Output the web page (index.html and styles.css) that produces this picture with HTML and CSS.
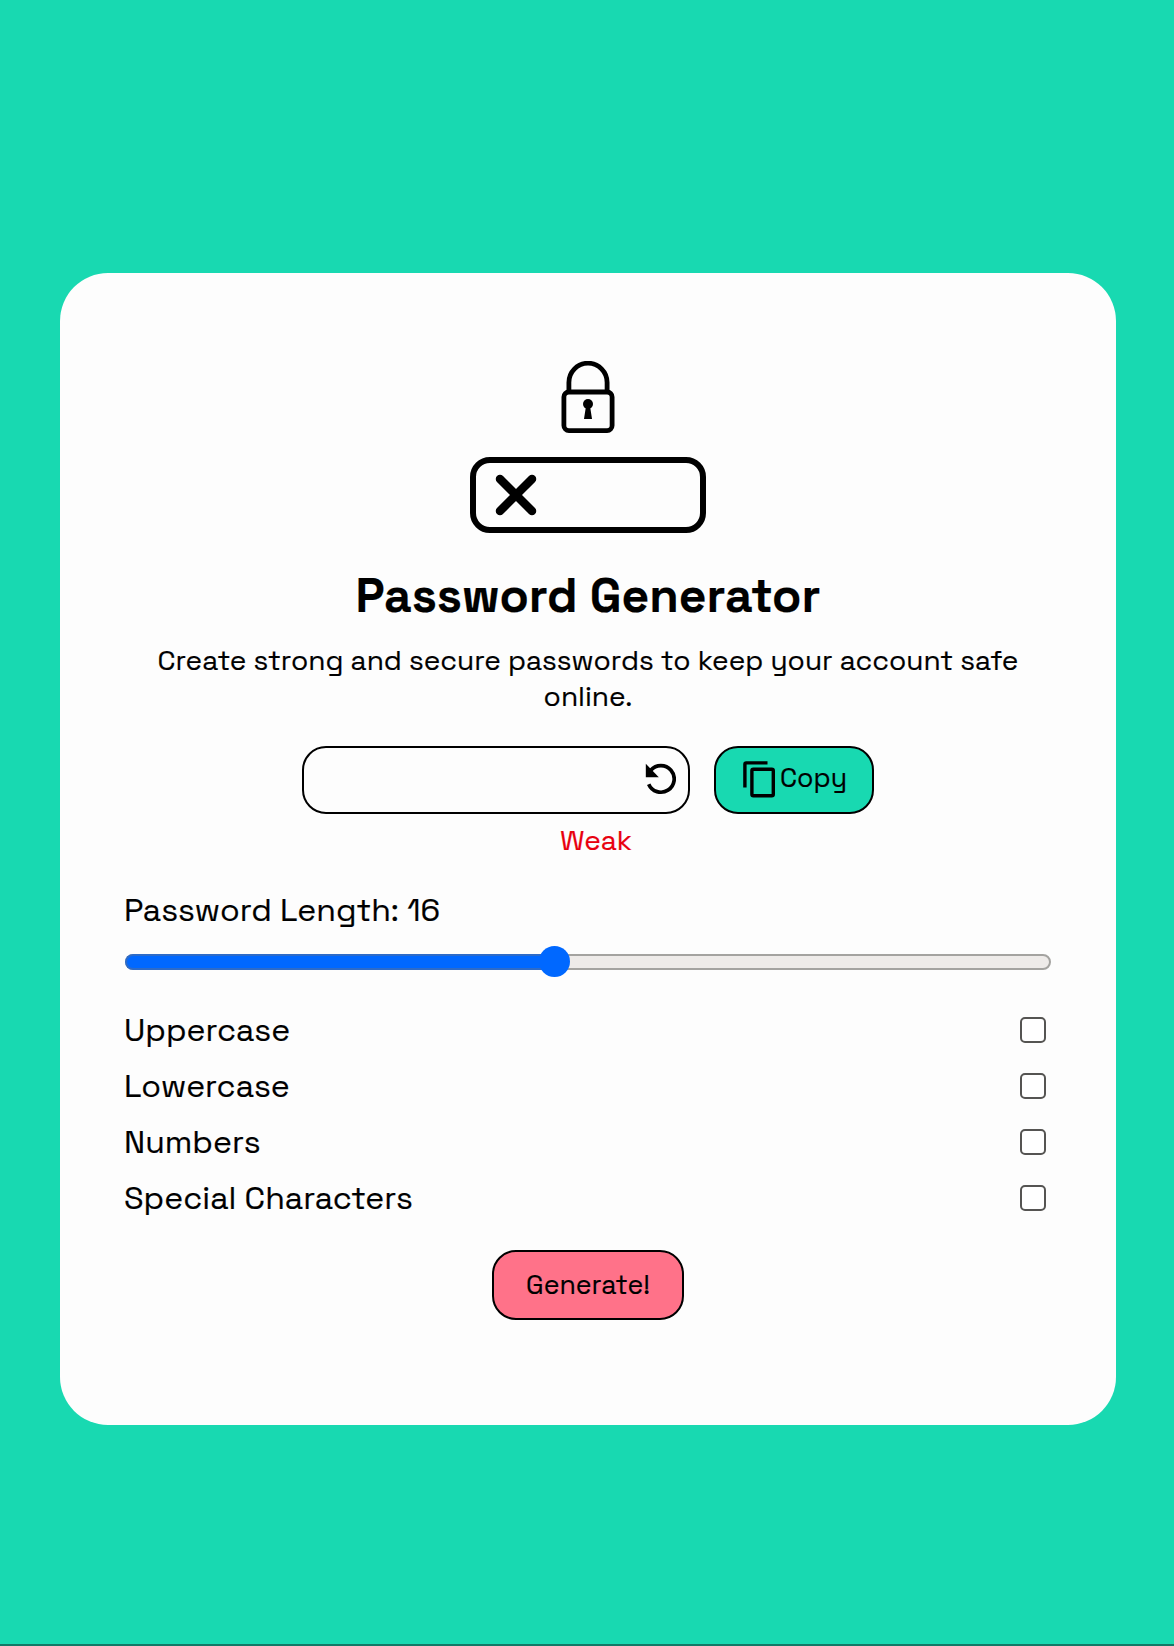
FILE: index.html
```html
<!DOCTYPE html>
<html lang="en">
<head>
<meta charset="utf-8">
<title>Password Generator</title>
<link rel="stylesheet" href="styles.css">
</head>
<body>
<main class="card">
  <svg class="logo" width="236" height="173" viewBox="0 0 236 173" fill="none" stroke="#000">
    <path d="M98.900 30V21.500a19.100 19.300 0 0 1 38.200 0V30" stroke-width="4.800"/>
    <rect x="93.900" y="31" width="48.200" height="38.600" rx="5" stroke-width="4.800"/>
    <circle cx="118" cy="43" r="5" fill="#000" stroke="none"/>
    <path d="M116 45h4l2 13h-8z" fill="#000" stroke="none"/>
    <rect x="3" y="99" width="230" height="70" rx="17" stroke-width="6"/>
    <path d="M30 118l32 32M62 118l-32 32" stroke-width="8.500" stroke-linecap="round"/>
  </svg>
  <h1 class="title">Password Generator</h1>
  <p class="intro">Create strong and secure passwords to keep your account safe online.</p>
  <div class="output">
    <div class="field">
      <svg class="refresh" width="32" height="32" viewBox="0 0 32 32" fill="none">
        <path d="M6.800 7.250A13.300 13.300 0 1 1 4.700 21.200" stroke="#000" stroke-width="3.700"/>
        <path d="M1.800 .7V14.200H14.800z" fill="#000"/>
      </svg>
    </div>
    <button class="btn copy">
      <svg class="copy-icon" width="32" height="37" viewBox="0 0 32 37" fill="none" stroke="#000" stroke-width="3.400">
        <path d="M1.900 26.500V3.200q0-1.300 1.300-1.300H24.500"/>
        <rect x="8.900" y="8.200" width="21.400" height="26.600" rx="1.500"/>
      </svg>
      <span>Copy</span>
    </button>
  </div>
  <p class="strength">Weak</p>
  <div class="options">
    <label class="length" for="length">Password Length: 16</label>
    <div class="slider" id="length"><div class="fill"></div><div class="thumb"></div></div>
    <label class="option"><span>Uppercase</span><input class="check" type="checkbox"></label>
    <label class="option"><span>Lowercase</span><input class="check" type="checkbox"></label>
    <label class="option"><span>Numbers</span><input class="check" type="checkbox"></label>
    <label class="option"><span>Special Characters</span><input class="check" type="checkbox"></label>
  </div>
  <button class="btn generate">Generate!</button>
</main>
</body>
</html>
```
FILE: styles.css
```css
* { box-sizing: border-box; }
body {
  margin: 0;
  height: 1646px;
  padding: 273px 58px 0 60px;
  background: #18d9b1;
  border-bottom: 2px solid #107966;
  font-family: "Space Grotesk", Inter, "Liberation Sans", sans-serif;
  color: #000;
  -webkit-text-stroke: 0.2px currentColor;
}
.card {
  height: 1152px;
  padding: 88px 64px 0;
  border-radius: 48px;
  background: #fdfdfd;
  display: flex;
  flex-direction: column;
  align-items: center;
}
.logo { flex: none; }
.title { margin: 32px 0 0; font-size: 48px; line-height: 60px; font-weight: 700; white-space: nowrap; }
.intro { width: 880px; margin: 16px 0 0; font-size: 28px; line-height: 36px; text-align: center; }
.output { display: flex; gap: 24px; margin-top: 32px; }
.field {
  width: 388px; height: 68px; padding: 0 12px 2px 0;
  border: 2px solid #000; border-radius: 24px;
  display: flex; align-items: center; justify-content: flex-end;
}
.btn {
  border: 2px solid #000; border-radius: 24px; padding: 0; color: #000;
  font-family: inherit; font-size: 26.667px;
  display: flex; align-items: center; justify-content: center;
}
.copy { width: 160px; height: 68px; padding: 0 0 4px 2px; gap: 5px; background: #18d9b1; }
.copy-icon { margin-top: 3px; }
.strength { margin: 8px 0 0 16px; font-size: 28px; line-height: 36px; color: #e8000e; }
.options { width: 926px; margin-top: 32px; display: flex; flex-direction: column; font-size: 32px; }
.length { margin-left: -1px; line-height: 40px; white-space: nowrap; }
.slider {
  height: 16px; margin: 24px 0 32px; border: 2px solid #a4a3a0; border-radius: 8px;
  background: #eeebe9; display: flex; align-items: center;
}
.fill { flex: none; width: 429px; height: 16px; margin-left: -2px; background: #0068ff; border: 2px solid #2d6bc8; border-right: 0; border-radius: 8px 0 0 8px; }
.thumb { flex: none; width: 31px; height: 31px; margin: 0 0 .5px -15.5px; border-radius: 50%; background: #0068ff; }
.option { height: 56px; margin-left: -1px; padding-right: 5px; display: flex; align-items: center; justify-content: space-between; white-space: nowrap; }
.option span { margin-top: -1px; }
.check { appearance: none; width: 26px; height: 26px; margin: 0; border: 2px solid #555452; border-radius: 5px; background: #fff; }
.generate { width: 192px; height: 70px; margin-top: 24px; background: #ff7289; }
```
